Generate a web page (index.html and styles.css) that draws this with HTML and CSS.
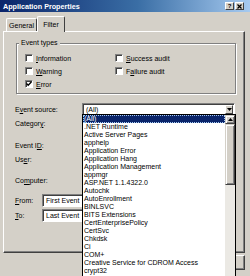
FILE: index.html
```html
<!DOCTYPE html>
<html>
<head>
<meta charset="utf-8">
<link rel="stylesheet" href="styles.css">
</head>
<body>
<div class="titlebar">
  <span class="title">Application Properties</span>
  <div class="tbtns">
    <span class="tbtn">?</span>
    <span class="tbtn">
      <svg width="5" height="5" viewBox="0 0 5 5"><path d="M0.5 0.5L4.5 4.5M4.5 0.5L0.5 4.5" stroke="#000" stroke-width="1.2"/></svg>
    </span>
  </div>
</div>
<div class="main">
  <div class="tabs">
    <div class="tab">General</div>
    <div class="tab active">Filter</div>
  </div>
  <div class="panel">
    <fieldset class="group">
      <legend>Event types</legend>
      <div class="checks">
        <label class="chk"><span class="box"></span><span><u>I</u>nformation</span></label>
        <label class="chk"><span class="box"></span><span><u>S</u>uccess audit</span></label>
        <label class="chk"><span class="box"></span><span><u>W</u>arning</span></label>
        <label class="chk"><span class="box"></span><span>F<u>a</u>ilure audit</span></label>
        <label class="chk"><span class="box"><svg width="6" height="6" viewBox="0 0 6 6"><path d="M0.5 2.5L2.2 4.3L5.5 0.8" fill="none" stroke="#000" stroke-width="1.3"/></svg></span><span><u>E</u>rror</span></label>
      </div>
    </fieldset>
    <div class="form">
      <div class="row">
        <span class="lbl">E<u>v</u>ent source:</span>
        <div class="combo wide open">
          <span class="val">(All)</span>
          <span class="arrow"><svg width="5" height="3" viewBox="0 0 5 3"><path d="M0 0H5L2.5 3Z" fill="#000"/></svg></span>
          <div class="dropdown">
            <ul class="items">
              <li class="sel">(All)</li>
              <li>.NET Runtime</li>
              <li>Active Server Pages</li>
              <li>apphelp</li>
              <li>Application Error</li>
              <li>Application Hang</li>
              <li>Application Management</li>
              <li>appmgr</li>
              <li>ASP.NET 1.1.4322.0</li>
              <li>Autochk</li>
              <li>AutoEnrollment</li>
              <li>BINLSVC</li>
              <li>BITS Extensions</li>
              <li>CertEnterprisePolicy</li>
              <li>CertSvc</li>
              <li>Chkdsk</li>
              <li>Ci</li>
              <li>COM+</li>
              <li>Creative Service for CDROM Access</li>
              <li>crypt32</li>
            </ul>
            <div class="sbar">
              <span class="sbtn"><svg width="5" height="3" viewBox="0 0 5 3"><path d="M0 3H5L2.5 0Z" fill="#000"/></svg></span>
              <span class="thumb"></span>
              <span class="track"></span>
            </div>
          </div>
        </div>
      </div>
      <div class="row r-cat">
        <span class="lbl">Categor<u>y</u>:</span>
        <div class="combo wide"></div>
      </div>
      <div class="row r-id">
        <span class="lbl">Event I<u>D</u>:</span>
        <div class="edit wide"></div>
      </div>
      <div class="row r-user">
        <span class="lbl">Us<u>e</u>r:</span>
        <div class="edit wide"></div>
      </div>
      <div class="row r-comp">
        <span class="lbl">Co<u>m</u>puter:</span>
        <div class="edit wide"></div>
      </div>
      <div class="row short r-from">
        <span class="lbl"><u>F</u>rom:</span>
        <div class="combo narrow"><span class="val">First Event</span></div>
      </div>
      <div class="row short r-to">
        <span class="lbl"><u>T</u>o:</span>
        <div class="combo narrow"><span class="val">Last Event</span></div>
      </div>
    </div>
  </div>
  <div class="buttons">
    <span class="btn"></span>
    <span class="btn"></span>
    <span class="btn"></span>
  </div>
</div>
</body>
</html>
```

FILE: styles.css
```css
* { box-sizing: border-box; }
html, body { margin: 0; padding: 0; }
body {
  width: 250px;
  height: 276px;
  overflow: hidden;
  background: #d4d0c8;
  font-family: "Liberation Sans", Arial, sans-serif;
  font-size: 7px;
  color: #000;
}
u { text-decoration: underline; text-underline-offset: 1px; }

.titlebar {
  height: 12px;
  background: linear-gradient(to right, #0a246a 0%, #3a6ea5 55%, #a6caf0 100%);
  display: flex;
  align-items: center;
  justify-content: space-between;
  padding: 0 6px 0 3px;
}
.title { color: #fff; font-weight: bold; font-size: 7.2px; }
.tbtns { display: flex; gap: 1px; }
.tbtn {
  width: 9px;
  height: 8px;
  background: #d4d0c8;
  border: 1px solid;
  border-color: #fff #404040 #404040 #fff;
  font-size: 6px;
  font-weight: bold;
  line-height: 6px;
  display: flex;
  align-items: center;
  justify-content: center;
}

.main { padding: 4px 5px 0 3px; }

.tabs { display: flex; align-items: flex-end; height: 15px; padding-left: 3px; }
.tab {
  height: 13px;
  width: 31px;
  border: 1px solid;
  border-color: #fff #404040 transparent #fff;
  border-bottom: none;
  border-radius: 2px 2px 0 0;
  display: flex;
  align-items: center;
  justify-content: center;
  padding-top: 1px;
}
.tab.active {
  height: 16px;
  width: 28px;
  margin-bottom: -1px;
  background: #d4d0c8;
  position: relative;
  z-index: 1;
  padding-bottom: 1px;
}

.panel {
  height: 222px;
  border: 1px solid;
  border-color: #fff #404040 #404040 #fff;
  box-shadow: inset -1px -1px 0 #808080;
  padding: 0 8px 0 12px;
}

.group {
  margin: 7px 0 0 0;
  padding: 0;
  width: 220px;
  border: 1px solid #808080;
  box-shadow: 1px 1px 0 #fff, inset 1px 1px 0 #fff;
}
.group legend {
  margin-left: 2px;
  padding: 0 2px;
  line-height: 8px;
  background: #d4d0c8;
}
.checks {
  display: grid;
  grid-template-columns: 90px 1fr;
  row-gap: 5px;
  padding: 7px 0 5px 8px;
}
.chk { display: flex; align-items: center; gap: 3px; height: 8px; }
.box {
  width: 8px;
  height: 8px;
  background: #fff;
  border: 1px solid;
  border-color: #808080 #fff #fff #808080;
  box-shadow: inset 1px 1px 0 #404040;
  display: flex;
  align-items: center;
  justify-content: center;
}

.form { display: flex; flex-direction: column; margin-top: 9px; margin-left: -1px; }
.row { display: flex; align-items: center; height: 12px; }
.lbl { width: 67px; flex: none; }
.row.short .lbl { width: 27px; }
.r-cat { margin-top: 2px; }
.r-id { margin-top: 10px; }
.r-user { margin-top: 2px; }
.r-comp { margin-top: 9px; }
.r-from { margin-top: 8px; height: 13px; }
.r-to { margin-top: 2px; height: 13px; }

.combo, .edit {
  height: 100%;
  background: #fff;
  border: 1px solid;
  border-color: #808080 #fff #fff #808080;
  box-shadow: inset 1px 1px 0 #404040;
  display: flex;
  align-items: center;
  padding-left: 3px;
  position: relative;
}
.wide { width: 153px; }
.narrow { width: 80px; }
.val { flex: 1; }
.arrow {
  width: 8px;
  height: 9px;
  margin-right: 1px;
  background: #d4d0c8;
  border: 1px solid;
  border-color: #fff #404040 #404040 #fff;
  display: flex;
  align-items: center;
  justify-content: center;
}

.dropdown {
  position: absolute;
  top: 100%;
  left: -1px;
  width: 154px;
  height: 170px;
  background: #fff;
  border: 1px solid #000;
  display: flex;
  z-index: 5;
}
.items { list-style: none; margin: 0; padding: 0; flex: 1; }
.items li { line-height: 8px; height: 8px; padding-left: 1px; white-space: nowrap; overflow: hidden; }
.items li.sel { background: #0a246a; color: #fff; outline: 1px dotted #a6caf0; outline-offset: -1px; }
.sbar { width: 10px; display: flex; flex-direction: column; }
.sbtn, .thumb {
  background: #d4d0c8;
  border: 1px solid;
  border-color: #d4d0c8 #404040 #404040 #d4d0c8;
  box-shadow: inset 1px 1px 0 #fff, inset -1px -1px 0 #808080;
}
.sbtn { height: 9px; display: flex; align-items: center; justify-content: center; }
.thumb { height: 61px; }
.track { flex: 1; background: #ebe9e4; }

.buttons { display: flex; justify-content: flex-end; gap: 4px; padding: 2px 0 0 0; }
.btn {
  width: 40px;
  height: 15px;
  border: 1px solid;
  border-color: #fff #404040 #404040 #fff;
  box-shadow: inset -1px -1px 0 #808080;
}
```
